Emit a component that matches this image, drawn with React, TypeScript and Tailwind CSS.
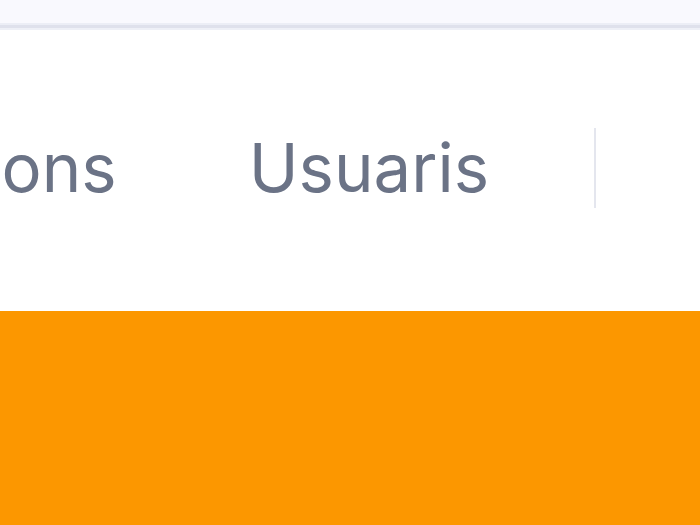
import React from "react";

const App = () => {
  return (
    <div className="w-[700px] h-[525px] overflow-hidden bg-white flex flex-col" style={{ fontFamily: "Inter, 'Noto Sans', sans-serif" }}>
      {/* top strip */}
      <div className="h-[23px] shrink-0 bg-[#f9f9fe]" />
      <div className="h-[2px] shrink-0 bg-[#eceef6]" />
      <div className="h-[3px] shrink-0 bg-[#dfe1ec]" />
      <div className="h-[2px] shrink-0 bg-[#eef0f7]" />

      {/* nav bar */}
      <div className="h-[281px] shrink-0 flex items-center justify-end pr-[104px] pb-[6px] overflow-hidden">
        <div className="flex items-center whitespace-nowrap text-[67px] leading-none text-[#6b7386]">
          <span>Aplicacions</span>
          <span className="ml-[132px]">Usuaris</span>
          <div className="ml-[105px] w-[2px] h-[80px] bg-[#e4e6ee]" />
        </div>
      </div>

      {/* orange band */}
      <div className="flex-1 bg-[#fc9700]" />
    </div>
  );
};

export default App;
